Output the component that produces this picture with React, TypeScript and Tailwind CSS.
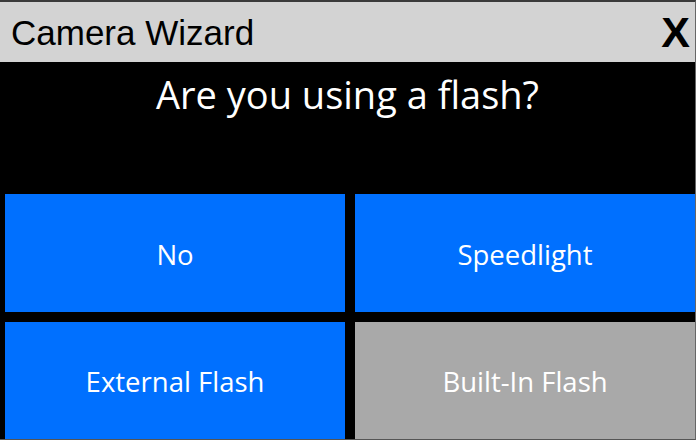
import React from "react";

const segoe = { fontFamily: '"Open Sans", "Noto Sans", sans-serif' };

export default function App() {
  return (
    <div className="w-[696px] h-[440px] bg-black overflow-hidden flex flex-col border-t-2 border-t-[#3a3a3a] border-r border-r-[#666] border-b border-b-[#555]">
      <div className="h-[60px] shrink-0 bg-[#d3d3d3] flex items-center justify-between pl-[11px] pr-[5px]">
        <span className="text-[35px] text-black leading-none" style={{ fontFamily: '"Liberation Sans", Arial, sans-serif' }}>
          Camera Wizard
        </span>
        <span className="text-[43px] text-black leading-none font-bold" style={{ fontFamily: '"Liberation Sans", Arial, sans-serif' }}>
          X
        </span>
      </div>
      <div className="h-[132px] shrink-0 flex justify-center pt-[9px]">
        <span className="text-[38px] text-white leading-tight" style={segoe}>
          Are you using a flash?
        </span>
      </div>
      <div className="flex-1 grid grid-cols-2 grid-rows-[118px_1fr] gap-[10px] pl-[5px]" style={segoe}>
        <div className="bg-[#0070ff] flex items-center justify-center pt-[3px] text-white text-[27.5px]">No</div>
        <div className="bg-[#0070ff] flex items-center justify-center pt-[3px] text-white text-[27.5px]">Speedlight</div>
        <div className="bg-[#0070ff] flex items-center justify-center pt-[3px] text-white text-[27.5px]">External Flash</div>
        <div className="bg-[#a9a9a9] flex items-center justify-center pt-[3px] text-white text-[27.5px]">Built-In Flash</div>
      </div>
    </div>
  );
}
